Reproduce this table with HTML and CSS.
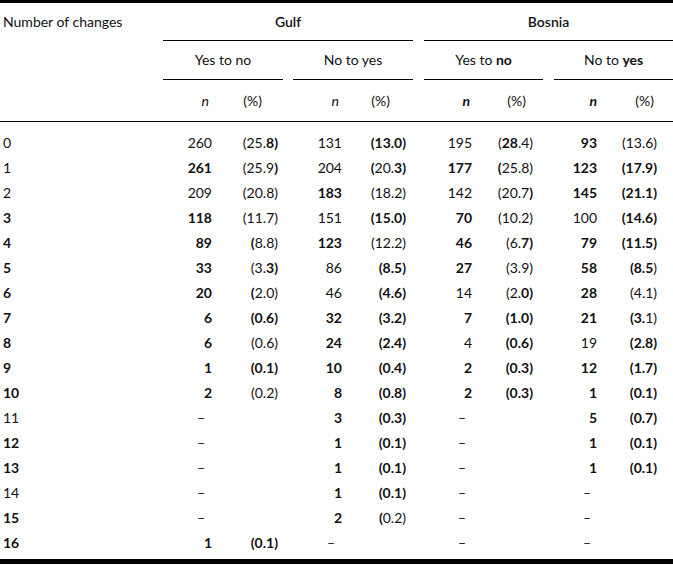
FILE: index.html
```html
<!DOCTYPE html>
<html lang="en">
<head>
<meta charset="utf-8">
<title>Number of changes</title>
<link rel="stylesheet" href="styles.css">
</head>
<body>
<table class="tbl">
  <colgroup>
    <col class="c-label">
    <col class="c-n"><col class="c-p1">
    <col class="c-sp1">
    <col class="c-n"><col class="c-p1">
    <col class="c-sp2">
    <col class="c-n"><col class="c-p3">
    <col class="c-sp2">
    <col class="c-n4"><col class="c-p4">
  </colgroup>
  <thead>
    <tr class="h1">
      <th class="lbl">Number of changes</th>
      <th colspan="5" class="grp">Gulf</th>
      <th class="sp"></th>
      <th colspan="5" class="grp">Bosnia</th>
    </tr>
    <tr class="h2">
      <th class="lbl"></th>
      <th colspan="2" class="sub">Yes to no</th>
      <th class="sp"></th>
      <th colspan="2" class="sub">No to yes</th>
      <th class="sp"></th>
      <th colspan="2" class="sub">Yes to <b>no</b></th>
      <th class="sp"></th>
      <th colspan="2" class="sub">No to <b>yes</b></th>
    </tr>
    <tr class="h3">
      <th class="lbl"></th>
      <th class="hn g1"><i>n</i></th><th class="hp g1">(%)</th>
      <th class="sp"></th>
      <th class="hn g2"><i>n</i></th><th class="hp g2">(%)</th>
      <th class="sp"></th>
      <th class="hn g3"><b><i>n</i></b></th><th class="hp g3">(%)</th>
      <th class="sp"></th>
      <th class="hn g4"><b><i>n</i></b></th><th class="hp g4">(%)</th>
    </tr>
  </thead>
  <tbody>
    <tr class="first">
      <td class="lbl">0</td>
      <td class="n g1">260</td><td class="p g1">(25.<b>8)</b></td><td></td>
      <td class="n g2">131</td><td class="p g2"><b>(13.0)</b></td><td></td>
      <td class="n g3">195</td><td class="p g3">(<b>28</b>.4)</td><td></td>
      <td class="n g4"><b>93</b></td><td class="p g4">(13.6)</td>
    </tr>
    <tr>
      <td class="lbl">1</td>
      <td class="n g1"><b>261</b></td><td class="p g1">(25.9<b>)</b></td><td></td>
      <td class="n g2">204</td><td class="p g2"><b>(</b>20.<b>3)</b></td><td></td>
      <td class="n g3"><b>177</b></td><td class="p g3"><b>(</b>25.8)</td><td></td>
      <td class="n g4"><b>123</b></td><td class="p g4"><b>(17.9)</b></td>
    </tr>
    <tr>
      <td class="lbl">2</td>
      <td class="n g1">209</td><td class="p g1">(20.8)</td><td></td>
      <td class="n g2"><b>183</b></td><td class="p g2">(18.2)</td><td></td>
      <td class="n g3">142</td><td class="p g3">(20.7<b>)</b></td><td></td>
      <td class="n g4"><b>145</b></td><td class="p g4"><b>(21.1)</b></td>
    </tr>
    <tr>
      <td class="lbl"><b>3</b></td>
      <td class="n g1"><b>118</b></td><td class="p g1">(11.7)</td><td></td>
      <td class="n g2">151</td><td class="p g2"><b>(15.0)</b></td><td></td>
      <td class="n g3"><b>70</b></td><td class="p g3">(10.2)</td><td></td>
      <td class="n g4">100</td><td class="p g4"><b>(14.6)</b></td>
    </tr>
    <tr>
      <td class="lbl"><b>4</b></td>
      <td class="n g1"><b>89</b></td><td class="p g1"><b>(</b>8.8)</td><td></td>
      <td class="n g2"><b>123</b></td><td class="p g2">(12.2)</td><td></td>
      <td class="n g3"><b>46</b></td><td class="p g3">(6.<b>7)</b></td><td></td>
      <td class="n g4"><b>79</b></td><td class="p g4"><b>(11.5)</b></td>
    </tr>
    <tr>
      <td class="lbl"><b>5</b></td>
      <td class="n g1"><b>33</b></td><td class="p g1">(3.<b>3)</b></td><td></td>
      <td class="n g2">86</td><td class="p g2"><b>(8.5)</b></td><td></td>
      <td class="n g3"><b>27</b></td><td class="p g3">(3.9)</td><td></td>
      <td class="n g4"><b>58</b></td><td class="p g4"><b>(8.5</b>)</td>
    </tr>
    <tr>
      <td class="lbl"><b>6</b></td>
      <td class="n g1"><b>20</b></td><td class="p g1"><b>(</b>2.0)</td><td></td>
      <td class="n g2">46</td><td class="p g2"><b>(4.6)</b></td><td></td>
      <td class="n g3">14</td><td class="p g3">(2.<b>0)</b></td><td></td>
      <td class="n g4"><b>28</b></td><td class="p g4">(4.1)</td>
    </tr>
    <tr>
      <td class="lbl"><b>7</b></td>
      <td class="n g1"><b>6</b></td><td class="p g1"><b>(0.6)</b></td><td></td>
      <td class="n g2"><b>32</b></td><td class="p g2"><b>(3.2)</b></td><td></td>
      <td class="n g3"><b>7</b></td><td class="p g3"><b>(1.0)</b></td><td></td>
      <td class="n g4"><b>21</b></td><td class="p g4"><b>(3.</b>1)</td>
    </tr>
    <tr>
      <td class="lbl"><b>8</b></td>
      <td class="n g1"><b>6</b></td><td class="p g1">(0.6)</td><td></td>
      <td class="n g2"><b>24</b></td><td class="p g2"><b>(2.4)</b></td><td></td>
      <td class="n g3">4</td><td class="p g3"><b>(0.6)</b></td><td></td>
      <td class="n g4">19</td><td class="p g4"><b>(2.8)</b></td>
    </tr>
    <tr>
      <td class="lbl"><b>9</b></td>
      <td class="n g1"><b>1</b></td><td class="p g1"><b>(0.1)</b></td><td></td>
      <td class="n g2"><b>10</b></td><td class="p g2"><b>(0.4)</b></td><td></td>
      <td class="n g3"><b>2</b></td><td class="p g3"><b>(0.3)</b></td><td></td>
      <td class="n g4"><b>12</b></td><td class="p g4"><b>(1.7)</b></td>
    </tr>
    <tr>
      <td class="lbl"><b>10</b></td>
      <td class="n g1"><b>2</b></td><td class="p g1">(0.2)</td><td></td>
      <td class="n g2"><b>8</b></td><td class="p g2"><b>(0.8)</b></td><td></td>
      <td class="n g3"><b>2</b></td><td class="p g3"><b>(0.3)</b></td><td></td>
      <td class="n g4"><b>1</b></td><td class="p g4"><b>(0.1)</b></td>
    </tr>
    <tr>
      <td class="lbl">11</td>
      <td class="n g1 dash">–</td><td class="p g1"></td><td></td>
      <td class="n g2"><b>3</b></td><td class="p g2"><b>(0.3)</b></td><td></td>
      <td class="n g3 dash">–</td><td class="p g3"></td><td></td>
      <td class="n g4"><b>5</b></td><td class="p g4"><b>(0.7)</b></td>
    </tr>
    <tr>
      <td class="lbl"><b>12</b></td>
      <td class="n g1 dash">–</td><td class="p g1"></td><td></td>
      <td class="n g2"><b>1</b></td><td class="p g2"><b>(0.1)</b></td><td></td>
      <td class="n g3 dash">–</td><td class="p g3"></td><td></td>
      <td class="n g4"><b>1</b></td><td class="p g4"><b>(0.1)</b></td>
    </tr>
    <tr>
      <td class="lbl"><b>13</b></td>
      <td class="n g1 dash">–</td><td class="p g1"></td><td></td>
      <td class="n g2"><b>1</b></td><td class="p g2"><b>(0.1)</b></td><td></td>
      <td class="n g3 dash">–</td><td class="p g3"></td><td></td>
      <td class="n g4"><b>1</b></td><td class="p g4"><b>(0.1)</b></td>
    </tr>
    <tr>
      <td class="lbl">14</td>
      <td class="n g1 dash">–</td><td class="p g1"></td><td></td>
      <td class="n g2"><b>1</b></td><td class="p g2"><b>(0.1)</b></td><td></td>
      <td class="n g3 dash">–</td><td class="p g3"></td><td></td>
      <td class="n g4 dash">–</td><td class="p g4"></td>
    </tr>
    <tr>
      <td class="lbl"><b>15</b></td>
      <td class="n g1 dash">–</td><td class="p g1"></td><td></td>
      <td class="n g2"><b>2</b></td><td class="p g2"><b>(</b>0.2)</td><td></td>
      <td class="n g3 dash">–</td><td class="p g3"></td><td></td>
      <td class="n g4 dash">–</td><td class="p g4"></td>
    </tr>
    <tr class="last">
      <td class="lbl"><b>16</b></td>
      <td class="n g1"><b>1</b></td><td class="p g1"><b>(0.1)</b></td><td></td>
      <td class="n g2 dash">–</td><td class="p g2"></td><td></td>
      <td class="n g3 dash">–</td><td class="p g3"></td><td></td>
      <td class="n g4 dash">–</td><td class="p g4"></td>
    </tr>
  </tbody>
</table>
</body>
</html>
```

FILE: styles.css
```css
html, body {
  margin: 0;
  padding: 0;
  background: #ffffff;
}

body {
  font-family: "Lato", "Open Sans", "Liberation Sans", sans-serif;
  font-size: 14px;
  color: #111111;
}

.tbl {
  width: 673px;
  table-layout: fixed;
  border-collapse: separate;
  border-spacing: 0;
  border-top: 3px solid #000;
  border-bottom: 5px solid #000;
}

.c-label { width: 163px; }
.c-n { width: 50px; }
.c-n4 { width: 45px; }
.c-p1 { width: 70px; }
.c-p3 { width: 69px; }
.c-p4 { width: 74px; }
.c-sp1 { width: 10px; }
.c-sp2 { width: 11px; }

th, td {
  padding: 0;
  white-space: nowrap;
  font-weight: 400;
  line-height: 18px;
}

b { font-weight: 700; }

.lbl {
  text-align: left;
  padding-left: 3px;
}

.h1 th {
  height: 37px;
  vertical-align: middle;
}

.h1 .lbl {
  font-weight: 400;
}

.grp {
  font-weight: 600;
  text-align: center;
  border-bottom: 1px solid #000;
}

.h2 th {
  height: 38px;
  vertical-align: middle;
}

.sub {
  text-align: center;
  border-bottom: 1px solid #000;
}

.h3 th {
  height: 41px;
  vertical-align: middle;
  border-bottom: 1px solid #000;
}

.hn { text-align: right; padding-right: 4px; }
.hp { text-align: right; }
.hp.g1 { padding-right: 21px; }
.hp.g2 { padding-right: 23px; }
.hp.g3 { padding-right: 17px; }
.hp.g4 { padding-right: 19px; }
.hn.g4 { padding-right: 2px; }

tbody td {
  height: 25px;
  vertical-align: middle;
}

tbody tr.first td { padding-top: 8px; }
tbody tr.last td { padding-bottom: 4px; }

.n { text-align: right; padding-right: 1px; }
.n.g3, .n.g4 { padding-right: 2px; }
.n.dash { padding-right: 8px; }

.p { text-align: right; }
.p.g1 { padding-right: 5px; }
.p.g2 { padding-right: 7px; }
.p.g3 { padding-right: 10px; }
.p.g4 { padding-right: 16px; }
```
